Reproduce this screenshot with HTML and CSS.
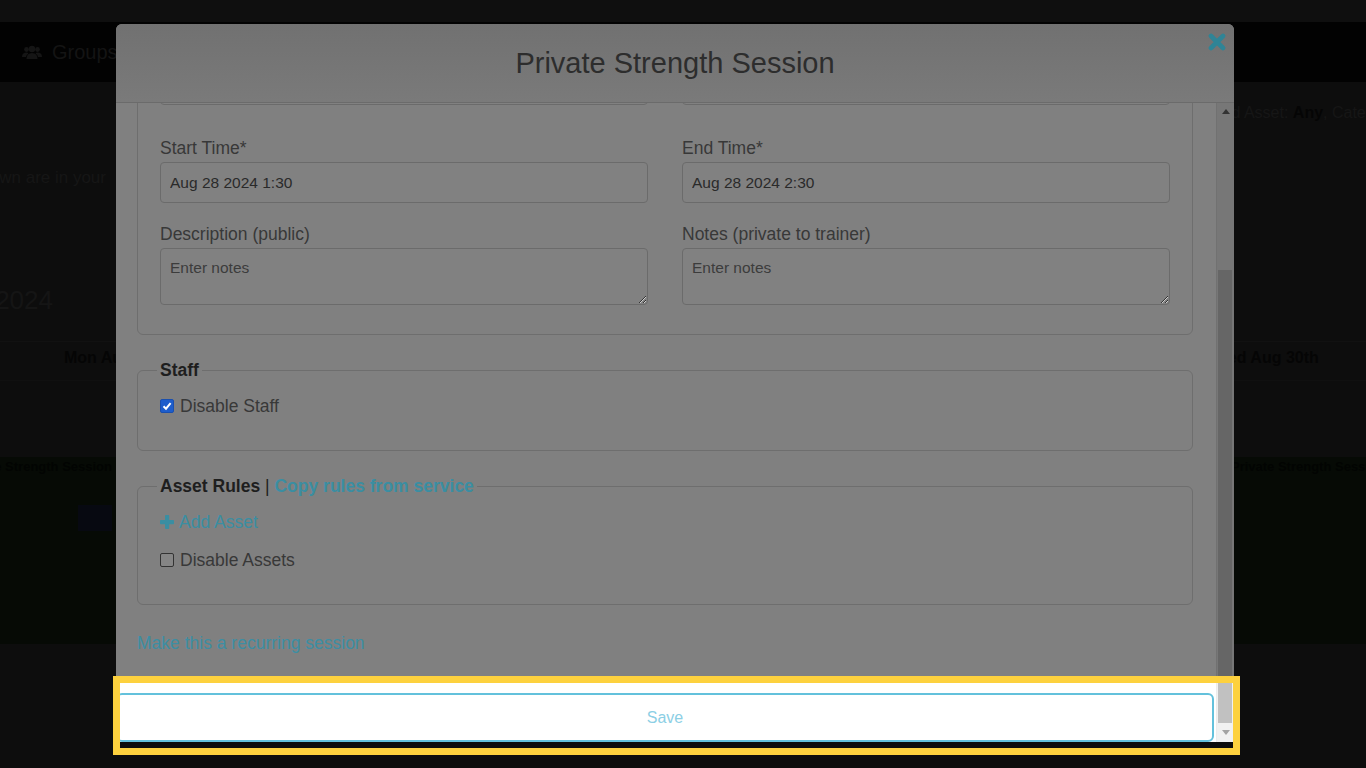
FILE: index.html
```html
<!DOCTYPE html>
<html>
<head>
    <title>Private Strength Session</title>
    <link rel="stylesheet" href="styles.css">
</head>
<body>
    <div class="page">
        <div class="topbar"></div>
        <nav class="navbar">
            <span class="nav-item">
                <svg width="20" height="14" viewBox="0 0 20 14"><circle cx="10" cy="4" r="3.2" fill="#151515"/><circle cx="4.5" cy="4.5" r="2.4" fill="#151515"/><circle cx="15.5" cy="4.5" r="2.4" fill="#151515"/><path d="M4.5 14 Q4.5 8 10 8 Q15.5 8 15.5 14 Z" fill="#151515"/><path d="M0 12 Q0 7.5 4.5 7.5 Q6 7.5 6.5 8.5 Q4 10 4 12 Z" fill="#151515"/><path d="M20 12 Q20 7.5 15.5 7.5 Q14 7.5 13.5 8.5 Q16 10 16 12 Z" fill="#151515"/></svg>
                Groups
            </span>
        </nav>

        <div class="page-main">
            <div class="page-row filter-row">
                <div class="cell-left"></div>
                <div class="cell-right">Filtered Asset: <b>Any</b>, Category: <b>All</b></div>
            </div>
            <div class="page-row tz-row">
                <div class="cell-left clip-left"><span>Session times shown are in your</span></div>
                <div class="cell-right"></div>
            </div>
            <div class="page-row week-row">
                <div class="cell-left clip-left"><span>Aug 26, 2024</span></div>
                <div class="cell-right"></div>
            </div>
            <div class="page-row cal-head">
                <div class="cell-left day-left">Mon Aug 26th</div>
                <div class="cell-right day-right">Wed Aug 30th</div>
            </div>
            <div class="page-row cal-band">
                <div class="cell-left clip-left band-left"><span>1:30 Private Strength Session</span></div>
                <div class="cell-right band-right">2:00: Private Strength Session</div>
            </div>
            <div class="band-chip"></div>
        </div>
    </div>

    <div class="modal">
        <div class="modal-header">
            <h2 class="modal-title">Private Strength Session</h2>
            <svg class="modal-close" width="18" height="18" viewBox="0 0 18 18"><path d="M3 3 L15 15 M15 3 L3 15" stroke="#2f8496" stroke-width="4.6" stroke-linecap="round"/></svg>
        </div>

        <div class="modal-main">
            <div class="modal-scroll">
                <fieldset class="panel panel-details">
                    <div class="form-row row-first">
                        <div class="form-group">
                            <input type="text" name="service">
                        </div>
                        <div class="form-group">
                            <input type="text" name="location">
                        </div>
                    </div>
                    <div class="form-row">
                        <div class="form-group">
                            <label>Start Time*</label>
                            <input type="text" value="Aug 28 2024 1:30">
                        </div>
                        <div class="form-group">
                            <label>End Time*</label>
                            <input type="text" value="Aug 28 2024 2:30">
                        </div>
                    </div>
                    <div class="form-row">
                        <div class="form-group">
                            <label>Description (public)</label>
                            <textarea placeholder="Enter notes"></textarea>
                        </div>
                        <div class="form-group">
                            <label>Notes (private to trainer)</label>
                            <textarea placeholder="Enter notes"></textarea>
                        </div>
                    </div>
                </fieldset>

                <fieldset class="panel">
                    <legend>Staff</legend>
                    <div class="check-row">
                        <span class="check is-checked"><svg width="12" height="12" viewBox="0 0 12 12"><path d="M2.5 6.2 L5 8.7 L9.6 3.2" stroke="#fff" stroke-width="2" fill="none"/></svg></span>
                        Disable Staff
                    </div>
                </fieldset>

                <fieldset class="panel panel-last">
                    <legend>Asset Rules <span class="sep">|</span> <a href="#" class="link-strong">Copy rules from service</a></legend>
                    <a href="#" class="add-row">
                        <svg width="14" height="14" viewBox="0 0 14 14"><rect x="5" y="0" width="4.2" height="14" rx="0.8" fill="#3a8ea2"/><rect x="0" y="5" width="14" height="4.2" rx="0.8" fill="#3a8ea2"/></svg>
                        Add Asset
                    </a>
                    <div class="check-row">
                        <span class="check"></span>
                        Disable Assets
                    </div>
                </fieldset>

                <a href="#" class="recurring-link">Make this a recurring session</a>
            </div>
            <div class="scrollbar">
                <div class="sb-arrow"><span class="tri-up"></span></div>
                <div class="sb-thumb"></div>
            </div>
        </div>

        <div class="modal-footer">
            <div class="save-wrap">
                <button class="btn-save">Save</button>
            </div>
            <div class="scrollbar scrollbar-lit">
                <div class="sb-thumb"></div>
                <div class="sb-arrow"><span class="tri-down"></span></div>
            </div>
        </div>
    </div>

    <div class="spotlight"></div>
</body>
</html>
```

FILE: styles.css
```css
* {
    box-sizing: border-box;
}

body {
    margin: 0;
    width: 1366px;
    height: 768px;
    overflow: hidden;
    position: relative;
    background: #0d0d0d;
    font-family: "Liberation Sans", Arial, sans-serif;
}

/* page behind the modal */

.topbar {
    height: 22px;
    background: #0f0f0f;
}

.navbar {
    height: 60px;
    background: #020202;
    display: flex;
    align-items: center;
    padding-left: 22px;
}

.nav-item {
    display: flex;
    align-items: center;
    gap: 10px;
    font-size: 20px;
    color: #141414;
}

.page-main {
    position: relative;
    padding-top: 21px;
}

.page-row {
    display: flex;
    justify-content: space-between;
    font-size: 16px;
    line-height: 20px;
    color: #161616;
}

.cell-left {
    width: 116px;
    overflow: hidden;
    white-space: nowrap;
}

.cell-right {
    width: 179px;
    overflow: hidden;
    white-space: nowrap;
}

.cell-right b {
    color: #050505;
}

.clip-left {
    display: flex;
    justify-content: flex-end;
}

.tz-row {
    margin-top: 45px;
    font-size: 17px;
}

.tz-row .cell-left {
    padding-right: 10px;
}

.week-row {
    margin-top: 97px;
    font-size: 26px;
    line-height: 30px;
    color: #151515;
}

.week-row .cell-left {
    padding-right: 63px;
}

.cal-head {
    margin-top: 26px;
    padding-top: 6px;
    padding-bottom: 12px;
    border-top: 1px solid #111;
    border-bottom: 1px solid #101010;
    font-weight: bold;
    color: #050505;
}

.day-left {
    padding-left: 64px;
}

.day-right {
    padding-left: 26px;
}

.cal-band {
    margin-top: 76px;
    height: 187px;
    background: #060a05;
    font-size: 13px;
    font-weight: bold;
    color: #020402;
}

.band-left {
    padding-right: 4px;
}

.band-right {
    padding-left: 10px;
}

.band-chip {
    position: absolute;
    left: 78px;
    top: 423px;
    width: 34px;
    height: 26px;
    background: #070911;
}

/* modal */

.modal {
    position: absolute;
    top: 24px;
    left: 116px;
    width: 1118px;
    height: 718px;
    display: flex;
    flex-direction: column;
    background: #808080;
    border-radius: 6px 6px 0 0;
    overflow: hidden;
}

.modal-header {
    height: 79px;
    flex: none;
    position: relative;
    display: flex;
    align-items: center;
    justify-content: center;
    background: linear-gradient(#717171, #7a7a7a);
    border-bottom: 1px solid #6b6b6b;
}

.modal-title {
    margin: 0;
    font-size: 29px;
    font-weight: normal;
    color: #2d2d2d;
}

.modal-close {
    position: absolute;
    top: 9px;
    right: 8px;
}

.modal-main {
    flex: 1;
    min-height: 0;
    display: flex;
}

.modal-scroll {
    flex: 1;
    overflow: hidden;
    display: flex;
    flex-direction: column;
    justify-content: flex-end;
    padding: 0 23px 0 21px;
}

.panel {
    margin: 0 0 24px;
    padding: 15px 22px 34px;
    border: 1px solid #6e6e6e;
    border-radius: 6px;
    min-width: 0;
}

.panel-details {
    padding-bottom: 8px;
}

.panel-last {
    margin-bottom: 28px;
}

legend {
    margin-left: -3px;
    padding: 0 3px;
    font-size: 17.5px;
    line-height: 22px;
    font-weight: bold;
    color: #1e1e1e;
}

.sep {
    font-weight: normal;
    color: #1e1e1e;
}

.link-strong {
    color: #3a8ea2;
    text-decoration: none;
}

.form-row {
    display: flex;
    gap: 34px;
    margin-bottom: 21px;
}

.row-first {
    margin-bottom: 33px;
}

.form-group {
    flex: 1;
    display: flex;
    flex-direction: column;
}

label {
    font-size: 17.5px;
    line-height: 20px;
    margin-bottom: 4px;
    color: #383838;
}

input[type="text"],
textarea {
    width: 100%;
    font-family: inherit;
    font-size: 15.5px;
    color: #2a2a2a;
    background: #818181;
    border: 1px solid #6b6b6b;
    border-radius: 4px;
    padding: 0 9px;
    outline: none;
}

input[type="text"] {
    height: 41px;
}

textarea {
    height: 57px;
    padding-top: 10px;
    resize: vertical;
}

textarea::placeholder {
    color: #3c3c3c;
}

.check-row {
    display: flex;
    align-items: center;
    gap: 6px;
    font-size: 17.5px;
    line-height: 20px;
    color: #383838;
}

.check {
    width: 14px;
    height: 14px;
    border: 1px solid #333;
    border-radius: 2px;
    background: #858585;
    display: flex;
    align-items: center;
    justify-content: center;
}

.check.is-checked {
    background: #1d5dcc;
    border-color: #1a4fae;
}

.add-row {
    display: flex;
    align-items: center;
    gap: 5px;
    margin-bottom: 18px;
    font-size: 17.5px;
    line-height: 20px;
    color: #3a8ea2;
    text-decoration: none;
}

.recurring-link {
    align-self: flex-start;
    margin-bottom: 30px;
    font-size: 17.5px;
    line-height: 20px;
    color: #3c8ea3;
    text-decoration: none;
}

/* scrollbar */

.scrollbar {
    width: 18px;
    flex: none;
    display: flex;
    flex-direction: column;
    background: #777;
    border-left: 1px solid #717171;
}

.sb-arrow {
    height: 17px;
    flex: none;
    display: flex;
    align-items: center;
    justify-content: center;
}

.sb-thumb {
    flex: 1;
    margin: 150px 2px 0 1px;
    background: #666;
}

.tri-up {
    border-left: 4px solid transparent;
    border-right: 4px solid transparent;
    border-bottom: 5px solid #333;
}

.tri-down {
    border-left: 4px solid transparent;
    border-right: 4px solid transparent;
    border-top: 5px solid #a3a3a3;
}

/* lit part, inside the tour highlight */

.modal-footer {
    height: 59px;
    flex: none;
    display: flex;
    background: #fff;
}

.save-wrap {
    flex: 1;
    padding: 10px 2px 0 0;
}

.btn-save {
    width: 100%;
    height: 49px;
    background: #fff;
    border: 2px solid #63c1dc;
    border-radius: 6px;
    font-family: inherit;
    font-size: 16px;
    color: #8ccfe5;
    cursor: pointer;
}

.scrollbar-lit {
    background: #f1f1f1;
    border-left: 1px solid #ececec;
}

.scrollbar-lit .sb-thumb {
    flex: none;
    height: 40px;
    margin: 0 2px 0 1px;
    background: #c1c1c1;
}

.scrollbar-lit .sb-arrow {
    flex: 1;
}

.spotlight {
    position: absolute;
    left: 113px;
    top: 676px;
    width: 1127px;
    height: 79px;
    border: 7px solid #fdd13e;
    pointer-events: none;
}
```
